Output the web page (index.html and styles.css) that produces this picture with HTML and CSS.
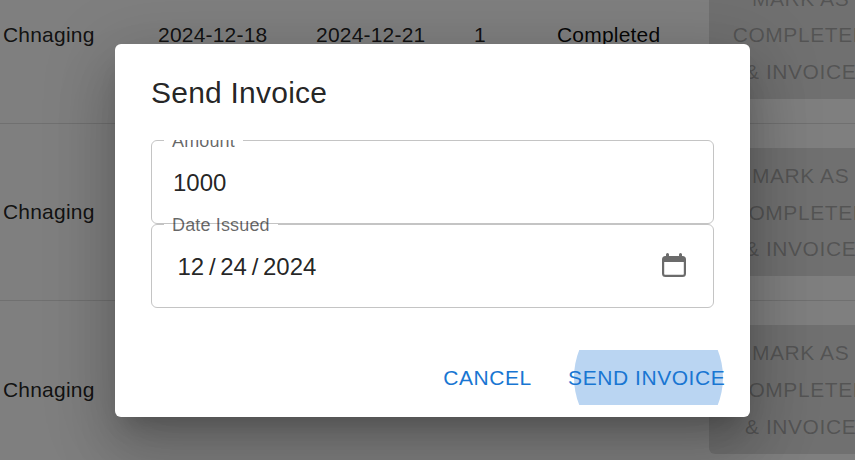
FILE: index.html
```html
<!DOCTYPE html>
<html lang="en">
<head>
<meta charset="utf-8">
<title>Send Invoice</title>
<link rel="stylesheet" href="styles.css">
</head>
<body>
<main class="table">
  <div class="row">
    <div class="cell first">Chnaging</div>
    <div class="cell">2024-12-18</div>
    <div class="cell">2024-12-21</div>
    <div class="cell">1</div>
    <div class="cell status">Completed</div>
    <div class="cell"><button class="mark" disabled>MARK AS COMPLETED &amp; INVOICE</button></div>
  </div>
  <div class="row">
    <div class="cell first">Chnaging</div>
    <div class="cell last"><button class="mark" disabled>MARK AS COMPLETED &amp; INVOICE</button></div>
  </div>
  <div class="row">
    <div class="cell first">Chnaging</div>
    <div class="cell last"><button class="mark" disabled>MARK AS COMPLETED &amp; INVOICE</button></div>
  </div>
</main>
<div class="backdrop">
  <section class="dialog" role="dialog">
    <h2 class="title">Send Invoice</h2>
    <div class="content">
      <div class="field">
        <span class="label">Amount</span>
        <span class="value">1000</span>
        <fieldset class="outline"><legend class="notch notch-amount"></legend></fieldset>
      </div>
      <div class="field">
        <span class="label">Date Issued</span>
        <span class="value date"><span>12</span><span>/</span><span>24</span><span>/</span><span>2024</span></span>
        <svg class="calendar" width="26" height="26" viewBox="0 0 26 26">
          <path fill="#6b6b6b" fill-rule="evenodd" d="M5 1.500a1.500 1.500 0 0 1 3 0V3h10V1.500a1.500 1.500 0 0 1 3 0V3h.5a3.500 3.500 0 0 1 3.500 3.500v14a3.500 3.500 0 0 1-3.500 3.500h-17A3.500 3.500 0 0 1 1 20.500v-14A3.500 3.500 0 0 1 4.500 3H5zM3.200 9v12a.8.8 0 0 0 .8.8h18a.8.8 0 0 0 .8-.8V9z"/>
        </svg>
        <fieldset class="outline"><legend class="notch notch-date"></legend></fieldset>
      </div>
    </div>
    <div class="actions">
      <button class="action">CANCEL</button>
      <button class="action"><span class="ripple"></span><span class="caption">SEND INVOICE</span></button>
    </div>
  </section>
</div>
</body>
</html>
```
FILE: styles.css
```css
* { box-sizing: border-box; }
body {
  margin: 0;
  height: 460px;
  overflow: hidden;
  background: #fff;
  font-family: "Liberation Sans", Arial, sans-serif;
  color: rgba(0, 0, 0, .87);
}
button { font: inherit; border: 0; }
.table { width: 900px; margin-top: -53.25px; }
.row {
  display: grid;
  grid-template-columns: 134px 158px 158px 83px 152px 1fr;
  align-items: center;
  height: 177.25px;
  border-bottom: 1px solid #e0e0e0;
  font-size: 21px;
  line-height: 30px;
  letter-spacing: .2px;
}
.cell { padding: 0 24px; white-space: nowrap; }
.first { padding: .5px 0 0 3px; }
.last { grid-column: 6; }
.status { color: rgba(0, 0, 0, .94); }
.mark {
  display: block;
  width: 184.2px;
  padding: 9.75px 24px 8.25px 23px;
  border-radius: 6px;
  background: rgba(0, 0, 0, .12);
  color: rgba(0, 0, 0, .26);
  font-size: 21px;
  line-height: 36.75px;
  letter-spacing: .58px;
  white-space: normal;
}
.backdrop {
  position: absolute;
  inset: 0;
  padding: 44px 105px 0 115px;
  background: rgba(0, 0, 0, .5);
  overflow: hidden;
}
.dialog {
  height: 373px;
  border-radius: 6px;
  background: #fff;
  box-shadow: 0 16.5px 22.5px -10.5px rgba(0, 0, 0, .2),
    0 36px 57px 4.5px rgba(0, 0, 0, .14),
    0 13.5px 69px 12px rgba(0, 0, 0, .12);
}
.title {
  margin: 0;
  padding: 25px 36px 23px;
  font-size: 30px;
  font-weight: 400;
  line-height: 48px;
  letter-spacing: .225px;
}
.content { padding: 0 36px 30px; overflow: hidden; }
.field {
  position: relative;
  display: flex;
  align-items: center;
  justify-content: space-between;
  height: 84px;
  padding: 0 27px 0 22px;
}
.outline {
  position: absolute;
  inset: -8px 0 0;
  min-width: 0;
  margin: 0;
  padding: 0 12px;
  border: 1px solid #c4c4c4;
  border-radius: 6px;
}
.notch { height: 17px; padding: 0; }
.notch-amount { width: 79px; }
.notch-date { width: 114px; }
.label {
  position: absolute;
  left: 21px;
  top: -12px;
  font-size: 18px;
  line-height: 26px;
  letter-spacing: .15px;
  color: rgba(0, 0, 0, .6);
}
.value { padding-top: 2px; font-size: 24px; line-height: 34px; }
.date { display: flex; gap: 4.7px; padding-left: 4.5px; }
.calendar { display: block; }
.actions {
  display: flex;
  justify-content: flex-end;
  gap: 12px;
  padding: 12px;
}
.action {
  position: relative;
  overflow: hidden;
  padding: 9px 12.7px 9px 12px;
  border-radius: 6px;
  background: transparent;
  color: #1976d2;
  font-size: 21px;
  line-height: 37px;
  letter-spacing: .56px;
}
.action + .action { margin-left: -.5px; }
.ripple {
  position: absolute;
  left: calc(50% - 73.500px);
  top: calc(50% - 74.5px);
  width: 149px;
  height: 149px;
  border-radius: 50%;
  background: #bad5f2;
}
.caption { position: relative; }
```
